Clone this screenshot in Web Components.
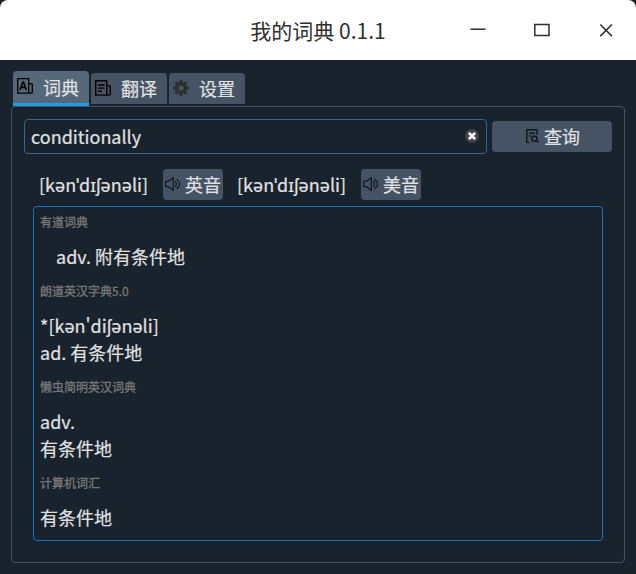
<!DOCTYPE html>
<html lang="zh-CN">
<head>
<meta charset="utf-8">
<title>我的词典 0.1.1</title>
<style>
html{background:#201e1e}
body{margin:0;font-family:"Noto Sans CJK SC","Noto Sans",sans-serif;font-size:18px;color:#e0e1e3;width:636px;height:574px;overflow:hidden}
</style>
</head>
<body>
<dict-app></dict-app>
<script>
const define = (name, html) => customElements.define(name, class extends HTMLElement {
  constructor() {
    super();
    const t = document.createElement('template');
    t.innerHTML = html;
    this.attachShadow({ mode: 'open' }).append(t.content.cloneNode(true));
  }
});

const icons = {
  dict: '<g fill="none" stroke="#000" stroke-width="1.3"><path d="M.7.7h11v14.4H.7zM11.7 5.7h2.6q1 0 1 1v7.4q0 1-1 1h-2.6"/><path stroke-width="1.6" d="M3 12 5.9 4h.6l2.9 8M4.2 9.4h4"/></g>',
  news: '<g fill="none" stroke="#000" stroke-width="1.4"><path d="M.7.7h11v14.4H.7zM11.7 5.7h2.6q1 0 1 1v7.4q0 1-1 1h-2.6M3 5h6.5M3 8.1h6.5M3 11.3h4"/></g>',
  gear: '<g fill="none" stroke="#2e2e2e"><circle cx="8" cy="8" r="4.3" stroke-width="3.5"/><path stroke-width="3.2" d="M8 0v3M8 13v3M0 8h3M13 8h3M2.4 2.4l2 2M11.6 11.6l2 2M2.4 13.6l2-2M11.6 4.4l2-2"/></g>',
  sound: '<g fill="none" stroke="#0c1117" stroke-width="1.1" stroke-linejoin="round"><path d="M.6 5.3h3L8.3 1.6v12.8L3.6 10.7h-3zM10.2 5.2q2.5 2.8 0 5.6M11.7 3.3q6 4.7 0 9.4"/></g>',
  search: '<g fill="none" stroke="#10151b" stroke-width="1.4"><path d="M5.5 14.4H2.8V1.7h10.2v5M5.2 5.2h5.4M5.2 8h2"/><circle cx="10.4" cy="10.7" r="2.6"/><path d="m12.2 12.5 2.1 2"/></g>'
};
customElements.define('ui-icon', class extends HTMLElement {
  constructor() {
    super();
    this.attachShadow({ mode: 'open' });
  }
  connectedCallback() {
    this.shadowRoot.innerHTML = `<style>:host{display:block;flex:none;width:16px;height:16px}svg{display:block}</style>
      <svg width="16" height="16" viewBox="0 0 16 16">${icons[this.getAttribute('name')]}</svg>`;
  }
});

define('title-bar', `<style>
:host{display:grid;grid-template-columns:1fr auto 1fr;height:60px;background:#fff;color:#2f2f2f;font-size:21px;line-height:58px;align-items:center;-webkit-text-stroke:0}
.title{grid-column:2}
.controls{display:flex;justify-content:flex-end;gap:48px;padding-right:22px}
svg{display:block;width:16px;height:16px;fill:none;stroke:#2d2d2d;stroke-width:1.5}
</style>
<span class="title"><slot></slot></span>
<div class="controls">
<svg viewBox="0 0 16 16"><path d="M.5 7.2h15"/></svg>
<svg viewBox="0 0 16 16"><path d="M.8 2.5h14.2v11H.8z"/></svg>
<svg viewBox="0 0 16 16"><path d="m2.3 2.5 11.6 11.6M13.9 2.5 2.3 14.1"/></svg>
</div>`);

define('tab-item', `<style>
:host{box-sizing:border-box;display:flex;align-items:center;width:76px;height:31px;margin-top:2px;padding:0 0 0 4px;gap:10px;background:#455364;border-radius:4px 4px 0 0;line-height:31px}
:host([active]){height:35px;margin-top:0;background:#54687a;border-bottom:3px solid #259ae9}
slot[name=icon]{display:block;margin-bottom:1px}
:host([active]) slot[name=icon]{margin-bottom:2px}
</style><slot name="icon"></slot><span><slot></slot></span>`);

define('tab-strip', `<style>:host{display:flex;gap:2px;height:35px;padding-left:13px}</style><slot></slot>`);

define('tab-pane', `<style>
:host{display:block;box-sizing:border-box;width:614px;height:457px;margin-left:11px;padding:12px;border:1px solid #455364;border-radius:4px}
</style><slot></slot>`);

define('search-field', `<style>
:host{display:flex;box-sizing:border-box;align-items:center;justify-content:space-between;width:463px;height:35px;border:1px solid #346792;border-radius:4px;padding:0 7px 0 6px;line-height:31px}
svg{width:14px;height:14px;margin-bottom:1px}
</style><span><slot></slot></span>
<svg viewBox="0 0 14 14"><circle cx="7" cy="7" r="6.8" fill="#454545"/><path d="m3.9 3.9 6.2 6.2m0-6.2L3.9 10.1" stroke="#fff" stroke-width="2.6"/></svg>`);

define('push-button', `<style>
:host{display:flex;box-sizing:border-box;align-items:center;justify-content:center;gap:4px;height:31px;background:#455364;border-radius:4px;line-height:31px}
:host([wide]){width:120px}
:host(:not([wide])){width:60px}
span{margin-top:-1px}
slot[name=icon]{display:block;margin-bottom:1px}
</style><slot name="icon"></slot><span><slot></slot></span>`);

define('tool-row', `<style>:host{display:flex;align-items:center;gap:5px}</style><slot></slot>`);

define('phonetic-item', `<style>
:host{display:flex;align-items:center;width:198px;height:31px;line-height:31px}
.ipa{width:124px;margin-top:-1px;white-space:nowrap}
</style><span class="ipa"><slot></slot></span><slot name="play"></slot>`);

define('phonetic-row', `<style>:host{display:flex;padding:15px 0 6px 15px}</style><slot></slot>`);

define('result-view', `<style>
:host{display:block;box-sizing:border-box;width:570px;height:335px;margin-left:9px;padding:6px;border:1px solid #1a72bb;border-radius:4px}
</style><slot></slot>`);

define('result-entry', `<style>
:host{display:block;height:69px;line-height:27px}
:host([lines="2"]){height:96px}
.source{font-size:12px;line-height:18px;height:18px;color:#787878;-webkit-text-stroke:.3px #787878;margin-bottom:12px}
.text{white-space:pre-line}
:host([indent]) .text{padding-left:16px}
</style><div class="source"><slot name="source"></slot></div><div class="text"><slot></slot></div>`);

define('dict-app', `<style>
:host{display:block;width:636px;height:574px;background:#19232d;border-radius:8px 8px 3px 3px;overflow:hidden;-webkit-text-stroke:.2px}
tab-strip{margin-top:11px}
</style>
<title-bar>我的词典 0.1.1</title-bar>
<tab-strip>
<tab-item active><ui-icon slot="icon" name="dict"></ui-icon>词典</tab-item>
<tab-item><ui-icon slot="icon" name="news"></ui-icon>翻译</tab-item>
<tab-item><ui-icon slot="icon" name="gear"></ui-icon>设置</tab-item>
</tab-strip>
<tab-pane>
<tool-row><search-field>conditionally</search-field><push-button wide><ui-icon slot="icon" name="search"></ui-icon>查询</push-button></tool-row>
<phonetic-row>
<phonetic-item>[kənˈdɪʃənəli]<push-button slot="play"><ui-icon slot="icon" name="sound"></ui-icon>英音</push-button></phonetic-item>
<phonetic-item>[kənˈdɪʃənəli]<push-button slot="play"><ui-icon slot="icon" name="sound"></ui-icon>美音</push-button></phonetic-item>
</phonetic-row>
<result-view>
<result-entry indent><span slot="source">有道词典</span>adv. 附有条件地</result-entry>
<result-entry lines="2"><span slot="source">朗道英汉字典5.0</span>*[kən'diʃənəli]<br>ad. 有条件地</result-entry>
<result-entry lines="2"><span slot="source">懒虫简明英汉词典</span>adv.<br>有条件地</result-entry>
<result-entry><span slot="source">计算机词汇</span>有条件地</result-entry>
</result-view>
</tab-pane>`);
</script>
</body>
</html>
